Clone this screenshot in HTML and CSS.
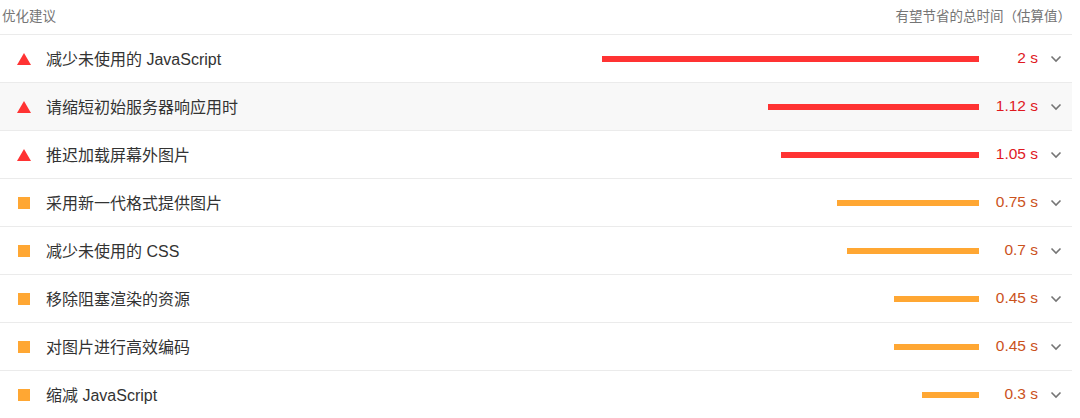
FILE: index.html
```html
<!DOCTYPE html>
<html lang="zh-CN">
<head>
    <meta charset="UTF-8">
    <meta name="viewport" content="width=device-width, initial-scale=1.0">
    <title>优化建议</title>
    <link rel="stylesheet" href="styles.css">
</head>
<body>
    <div class="audit-group">
        <div class="group-header">
            <span>优化建议</span>
            <span>有望节省的总时间（估算值）</span>
        </div>

        <div class="audit fail">
            <span class="icon"></span>
            <span class="title">减少未使用的 JavaScript</span>
            <div class="bar-area"><div class="bar" style="width: 377px"></div></div>
            <span class="value">2 s</span>
            <span class="chevron"><svg width="12" height="8" viewBox="0 0 12 8"><path d="M1.5 1.5 L6 6 L10.5 1.5" fill="none" stroke="#757575" stroke-width="1.6"/></svg></span>
        </div>

        <div class="audit fail hover">
            <span class="icon"></span>
            <span class="title">请缩短初始服务器响应用时</span>
            <div class="bar-area"><div class="bar" style="width: 211px"></div></div>
            <span class="value">1.12 s</span>
            <span class="chevron"><svg width="12" height="8" viewBox="0 0 12 8"><path d="M1.5 1.5 L6 6 L10.5 1.5" fill="none" stroke="#757575" stroke-width="1.6"/></svg></span>
        </div>

        <div class="audit fail">
            <span class="icon"></span>
            <span class="title">推迟加载屏幕外图片</span>
            <div class="bar-area"><div class="bar" style="width: 198px"></div></div>
            <span class="value">1.05 s</span>
            <span class="chevron"><svg width="12" height="8" viewBox="0 0 12 8"><path d="M1.5 1.5 L6 6 L10.5 1.5" fill="none" stroke="#757575" stroke-width="1.6"/></svg></span>
        </div>

        <div class="audit average">
            <span class="icon"></span>
            <span class="title">采用新一代格式提供图片</span>
            <div class="bar-area"><div class="bar" style="width: 142px"></div></div>
            <span class="value">0.75 s</span>
            <span class="chevron"><svg width="12" height="8" viewBox="0 0 12 8"><path d="M1.5 1.5 L6 6 L10.5 1.5" fill="none" stroke="#757575" stroke-width="1.6"/></svg></span>
        </div>

        <div class="audit average">
            <span class="icon"></span>
            <span class="title">减少未使用的 CSS</span>
            <div class="bar-area"><div class="bar" style="width: 132px"></div></div>
            <span class="value">0.7 s</span>
            <span class="chevron"><svg width="12" height="8" viewBox="0 0 12 8"><path d="M1.5 1.5 L6 6 L10.5 1.5" fill="none" stroke="#757575" stroke-width="1.6"/></svg></span>
        </div>

        <div class="audit average">
            <span class="icon"></span>
            <span class="title">移除阻塞渲染的资源</span>
            <div class="bar-area"><div class="bar" style="width: 85px"></div></div>
            <span class="value">0.45 s</span>
            <span class="chevron"><svg width="12" height="8" viewBox="0 0 12 8"><path d="M1.5 1.5 L6 6 L10.5 1.5" fill="none" stroke="#757575" stroke-width="1.6"/></svg></span>
        </div>

        <div class="audit average">
            <span class="icon"></span>
            <span class="title">对图片进行高效编码</span>
            <div class="bar-area"><div class="bar" style="width: 85px"></div></div>
            <span class="value">0.45 s</span>
            <span class="chevron"><svg width="12" height="8" viewBox="0 0 12 8"><path d="M1.5 1.5 L6 6 L10.5 1.5" fill="none" stroke="#757575" stroke-width="1.6"/></svg></span>
        </div>

        <div class="audit average">
            <span class="icon"></span>
            <span class="title">缩减 JavaScript</span>
            <div class="bar-area"><div class="bar" style="width: 57px"></div></div>
            <span class="value">0.3 s</span>
            <span class="chevron"><svg width="12" height="8" viewBox="0 0 12 8"><path d="M1.5 1.5 L6 6 L10.5 1.5" fill="none" stroke="#757575" stroke-width="1.6"/></svg></span>
        </div>
    </div>
</body>
</html>
```

FILE: styles.css
```css
body {
    margin: 0;
    background-color: #ffffff;
    font-family: "Liberation Sans", "Noto Sans CJK SC", sans-serif;
    color: #333333;
}
.audit-group {
    width: 1072px;
}
.group-header {
    display: flex;
    justify-content: space-between;
    align-items: center;
    height: 35px;
    padding: 0 1px 5px 2px;
    box-sizing: border-box;
    font-size: 13.5px;
    color: #757575;
    border-bottom: 1px solid #ebebeb;
}
.audit {
    display: flex;
    align-items: center;
    height: 47px;
    padding: 0 10px 0 17px;
    border-bottom: 1px solid #ebebeb;
    font-size: 16px;
}
.audit.hover {
    background-color: #f8f8f8;
}
.icon {
    flex: none;
    width: 14px;
    height: 12px;
    margin-right: 15px;
}
.fail .icon {
    width: 0;
    height: 0;
    border-left: 7px solid transparent;
    border-right: 7px solid transparent;
    border-bottom: 12px solid #ff3333;
}
.average .icon {
    width: 12px;
    height: 12px;
    margin-left: 1px;
    margin-right: 16px;
    background-color: #ffa733;
}
.title {
    flex: none;
    margin-top: -2px;
}
.bar-area {
    flex: 1;
    display: flex;
    justify-content: flex-end;
}
.bar {
    height: 6px;
}
.fail .bar {
    background-color: #ff3333;
}
.average .bar {
    background-color: #ffa733;
}
.value {
    flex: none;
    width: 52px;
    margin-left: 7px;
    margin-top: -1px;
    text-align: right;
    font-size: 15.5px;
}
.fail .value {
    color: #e0191f;
}
.average .value {
    color: #cb521c;
}
.chevron {
    flex: none;
    display: flex;
    width: 12px;
    margin-left: 12px;
}
```
